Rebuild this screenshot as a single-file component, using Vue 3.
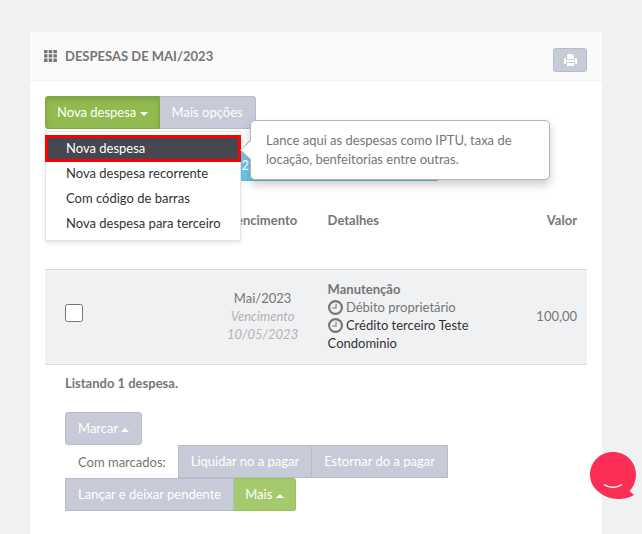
<script setup>
import { ref } from 'vue'

const menu = ['Nova despesa', 'Nova despesa recorrente', 'Com código de barras', 'Nova despesa para terceiro']
const marked = ref(false)
</script>

<template>
  <main class="page">
    <section class="card">
      <header class="card-head">
        <h1>
          <svg class="grid-icon" viewBox="0 0 13 12" aria-hidden="true">
            <path d="M0 0h3.500v3.300H0zM4.700 0h3.500v3.300H4.700zM9.400 0h3.500v3.300H9.400zM0 4.300h3.500v3.300H0zM4.700 4.300h3.500v3.300H4.700zM9.400 4.300h3.500v3.300H9.400zM0 8.600h3.500v3.300H0zM4.700 8.600h3.500v3.300H4.700zM9.400 8.600h3.500v3.300H9.400z" />
          </svg>
          <span>DESPESAS DE MAI/2023</span>
        </h1>
        <button class="print" type="button" aria-label="Imprimir">
          <svg viewBox="0 0 13 12" aria-hidden="true">
            <path d="M4 0h4l2 2v3H3V1zM1 4h1v2h9V4h1l1 1v5h-2V8H2v2H0V5zM3 9h7v3H3z" />
          </svg>
        </button>
      </header>

      <div class="card-body">
        <div class="toolbar">
          <button class="btn green active" type="button">Nova despesa <i class="caret down"></i></button>
          <button class="btn last" type="button">Mais opções</button>
          <ul class="menu">
            <li v-for="(item, i) in menu" :key="item">
              <a href="#" :class="{ selected: i === 0 }">{{ item }}</a>
            </li>
          </ul>
          <div class="tooltip" role="tooltip">Lance aqui as despesas como IPTU, taxa de locação, benfeitorias entre outras.</div>
        </div>

        <div class="period">
          <button class="current" type="button">2</button>
          <button class="next" type="button" aria-label="Próximo"></button>
          <button class="all" type="button" aria-label="Todos"></button>
        </div>

        <table>
          <thead>
            <tr>
              <th class="check"></th>
              <th class="due">Vencimento</th>
              <th class="details">Detalhes</th>
              <th class="value">Valor</th>
            </tr>
          </thead>
          <tbody>
            <tr>
              <td class="check"><input v-model="marked" type="checkbox" aria-label="Marcar despesa" /></td>
              <td class="due">Mai/2023<br /><em>Vencimento 10/05/2023</em></td>
              <td class="details">
                <strong>Manutenção</strong>
                <div>
                  <svg class="clock" viewBox="0 0 14 14" aria-hidden="true"><circle cx="7" cy="7" r="6" /><path d="M7.500 3.500v4H4" /></svg>
                  Débito proprietário
                </div>
                <div class="dark">
                  <svg class="clock" viewBox="0 0 14 14" aria-hidden="true"><circle cx="7" cy="7" r="6" /><path d="M7.500 3.500v4H4" /></svg>
                  Crédito terceiro Teste Condominio
                </div>
              </td>
              <td class="value">100,00</td>
            </tr>
          </tbody>
        </table>

        <footer class="card-foot">
          <p class="summary">Listando 1 despesa.</p>
          <button class="btn round" type="button">Marcar <i class="caret up"></i></button>
          <div class="actions">
            <span class="label">Com marcados:</span>
            <button class="btn" type="button">Liquidar no a pagar</button>
            <button class="btn joined" type="button">Estornar do a pagar</button>
          </div>
          <div class="actions">
            <button class="btn" type="button">Lançar e deixar pendente</button>
            <button class="btn green last" type="button">Mais <i class="caret up"></i></button>
          </div>
        </footer>
      </div>
    </section>

    <button class="chat" type="button" aria-label="Abrir chat">
      <svg viewBox="0 0 46 48" aria-hidden="true">
        <path class="bubble" d="M23 0C36 0 46 10 46 22.500C46 29 43.500 35 39.500 39L44 43C36 48 23 48 15 44C6 39.500 0 32 0 23C0 10 10 0 23 0Z" />
        <path class="smile" d="M14 32.500Q23 38.500 32 32.500" />
      </svg>
    </button>
  </main>
</template>

<style>
body {
  margin: 0;
  background: #f0f1f3;
}
</style>

<style scoped>
* {
  box-sizing: border-box;
}
.page {
  min-height: 100vh;
  display: flex;
  padding: 32px 40px 0 30px;
  font: 13px/18px Lato, sans-serif;
  color: #767676;
}
.card {
  flex: 1;
  min-width: 0;
  background: #fff;
  border-radius: 3px 3px 0 0;
}
.card-head {
  display: flex;
  align-items: center;
  justify-content: space-between;
  height: 49px;
  padding: 8px 15px 0 14px;
  background: #fafafa;
  border-bottom: 1px solid #eff0f4;
  border-radius: 3px 3px 0 0;
}
h1 {
  display: flex;
  align-items: center;
  gap: 8px;
  margin: 0 0 8px;
  font-size: 13px;
  line-height: 18px;
  font-weight: 700;
}
.grid-icon {
  width: 13px;
  height: 12px;
  fill: #767676;
}
button {
  font: inherit;
  cursor: pointer;
}
.print {
  display: flex;
  align-items: center;
  justify-content: center;
  width: 34px;
  height: 24px;
  padding: 0;
  border: 1px solid #b6bccb;
  border-radius: 3px;
  background: #c7cbd7;
}
.print svg {
  width: 13px;
  height: 12px;
  fill: #fff;
}
.card-body {
  padding: 15px;
}
.toolbar {
  position: relative;
  display: flex;
}
.btn {
  height: 33px;
  padding: 0 12px 1px;
  border: 1px solid #b6bccb;
  background: #c7cbd7;
  color: #fff;
  white-space: nowrap;
}
.btn.green {
  padding: 0 11px 1px;
  background: #a5c96d;
  border-color: #98c157;
}
.btn.active {
  background: #91bb50;
  border-color: #80a741;
  border-radius: 3px 0 0 3px;
  box-shadow: inset 0 3px 5px #00000020;
}
.btn.last {
  border-left: 0;
  border-radius: 0 3px 3px 0;
}
.btn.round {
  border-radius: 3px;
}
.btn.joined {
  border-left: 0;
}
.caret {
  display: inline-block;
  vertical-align: middle;
  border: 4px solid transparent;
}
.caret.down {
  border-top-color: #fff;
  border-bottom: 0;
}
.caret.up {
  border-bottom-color: #fff;
  border-top: 0;
}
.menu {
  position: absolute;
  z-index: 2;
  top: 35px;
  left: 0;
  width: 196px;
  margin: 0;
  padding: 4px 0;
  list-style: none;
  background: #fff;
  border: 1px solid #e1e3ed;
  box-shadow: 0 2px 4px #0000001a;
}
.menu a {
  display: block;
  padding: 3px 20px 4px;
  color: #333;
  text-decoration: none;
  white-space: nowrap;
}
.menu .selected {
  color: #fff;
  background: #474751;
  outline: 3px solid #f00;
  outline-offset: -2px;
}
.tooltip {
  position: absolute;
  z-index: 3;
  top: 24px;
  left: 205px;
  width: 300px;
  padding: 10px 15px;
  line-height: 19px;
  background: #fff;
  border: 1px solid #b4b4b4;
  border-radius: 5px;
  box-shadow: 0 5px 10px #00000033;
}
.tooltip::before {
  content: "";
  position: absolute;
  top: 18px;
  left: -11px;
  width: 11px;
  height: 22px;
  background: #b4b4b4;
  clip-path: polygon(0 50%, 100% 0, 100% 100%);
}
.tooltip::after {
  content: "";
  position: absolute;
  top: 19px;
  left: -10px;
  width: 11px;
  height: 20px;
  background: #fff;
  clip-path: polygon(0 50%, 100% 0, 100% 100%);
}
.period {
  display: flex;
  margin: 20px 0;
}
.period button {
  height: 32px;
  padding: 0 35px;
  border: 1px solid #5fbbe0;
  background: #70c4e6;
  color: #fff;
  text-align: right;
}
.period button + button {
  border-left: 0;
}
.period .current {
  width: 240px;
}
.period .next {
  width: 90px;
}
.period .all {
  width: 64px;
  padding: 0;
  border-radius: 0 3px 3px 0;
}
table {
  width: 100%;
  border-collapse: collapse;
  table-layout: fixed;
}
th {
  padding: 10px 10px 40px;
  font-weight: 700;
}
td {
  padding: 10px 10px 12px;
}
tbody tr {
  background: #f0f1f3;
  border: solid #d9dbde;
  border-width: 1px 0;
}
.check {
  width: 30%;
  padding-left: 20px;
  text-align: left;
}
.due {
  width: 110px;
  text-align: center;
}
.details {
  text-align: left;
  width: 178px;
}
.value {
  text-align: right;
}
em {
  color: #b3b3b3;
}
input {
  display: block;
  width: 18px;
  height: 18px;
  margin: 0 0 6px;
}
.dark {
  color: #333;
}
.clock {
  width: 15px;
  height: 15px;
  vertical-align: -3px;
  fill: none;
  stroke: #767676;
  stroke-width: 2;
}
.clock path {
  stroke-width: 1;
}
.card-foot {
  padding: 9px 20px;
}
.summary {
  margin: 0 0 20px;
  font-weight: 700;
}
.card-foot .btn {
  vertical-align: top;
}
.actions {
  display: flex;
  align-items: center;
}
.label {
  padding: 0 12px 0 13px;
}
.chat {
  position: fixed;
  right: 6px;
  bottom: 34px;
  width: 46px;
  height: 48px;
  padding: 0;
  border: 0;
  background: none;
}
.chat svg {
  display: block;
}
.bubble {
  fill: #fb2e55;
}
.smile {
  fill: none;
  stroke: #fff;
  stroke-width: 1.5;
}
</style>
